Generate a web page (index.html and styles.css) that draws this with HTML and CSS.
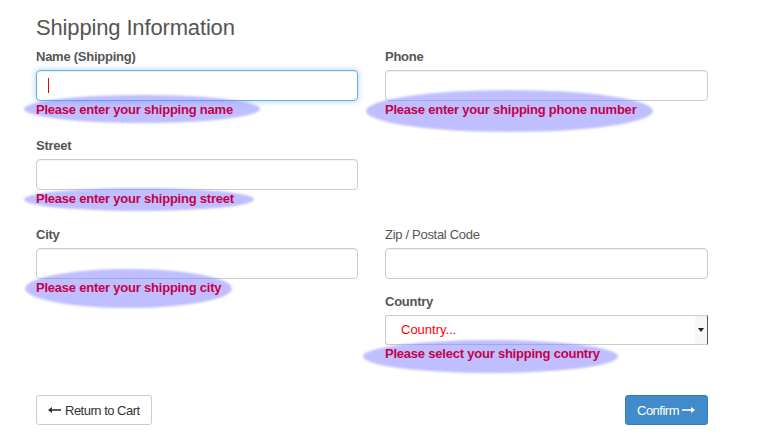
FILE: index.html
```html
<!DOCTYPE html>
<html>
<head>
<meta charset="utf-8">
<link rel="stylesheet" href="styles.css">
</head>
<body>
<div class="page">
  <h3 class="title">Shipping Information</h3>
  <div class="form-grid">
    <div class="group">
      <label class="lbl">Name (Shipping)</label>
      <div class="control focused"><span class="caret"></span></div>
      <div class="err err-name">Please enter your shipping name</div>
    </div>
    <div class="group">
      <label class="lbl">Phone</label>
      <div class="control"></div>
      <div class="err err-phone">Please enter your shipping phone number</div>
    </div>
    <div class="group">
      <label class="lbl">Street</label>
      <div class="control"></div>
      <div class="err err-street">Please enter your shipping street</div>
    </div>
    <div class="group empty"></div>
    <div class="group span2">
      <label class="lbl">City</label>
      <div class="control"></div>
      <div class="err err-city">Please enter your shipping city</div>
    </div>
    <div class="group">
      <label class="lbl normal">Zip / Postal Code</label>
      <div class="control"></div>
    </div>
    <div class="group">
      <label class="lbl">Country</label>
      <div class="select"><span class="select-text">Country...</span><span class="select-btn"><svg width="6" height="4" viewBox="0 0 6 4"><path d="M0 0h6L3 4z" fill="#222"/></svg></span></div>
      <div class="err err-country">Please select your shipping country</div>
    </div>
  </div>
  <div class="actions">
    <button class="btn btn-default"><svg class="arr" width="13" height="8" viewBox="0 0 13 8"><path d="M1 4h12" stroke="#333" stroke-width="1.6"/><path d="M0 4l4-3v6z" fill="#333"/></svg>Return to Cart</button>
    <button class="btn btn-primary">Confirm<svg class="arr r" width="13" height="8" viewBox="0 0 13 8"><path d="M0 4h12" stroke="#fff" stroke-width="1.6"/><path d="M13 4l-4-3v6z" fill="#fff"/></svg></button>
  </div>
</div>
</body>
</html>
```
FILE: styles.css
```css
* { box-sizing: border-box; }
body {
  margin: 0;
  background: #fff;
  font-family: "Liberation Sans", Arial, sans-serif;
  font-size: 13px;
  color: #555;
}
.page { padding: 0 36px; width: 744px; }
.title {
  margin: 15px 0 6px;
  font-size: 22px;
  letter-spacing: -0.15px;
  line-height: 26px;
  font-weight: normal;
  color: #555;
}
.form-grid {
  display: grid;
  grid-template-columns: 322px 323px;
  column-gap: 27px;
  row-gap: 13px;
}
.span2 { grid-row: span 2; }
.lbl {
  display: block;
  font-weight: bold;
  letter-spacing: -0.25px;
  line-height: 20px;
  margin-bottom: 3px;
  color: #555;
}
.lbl.normal { font-weight: normal; letter-spacing: -0.3px; }
.control {
  height: 31px;
  border: 1px solid #ccc;
  border-radius: 4px;
  background: #fff;
  box-shadow: inset 0 1px 1px rgba(0,0,0,0.06);
  position: relative;
}
.control.focused {
  border-color: #66afe9;
  box-shadow: inset 0 1px 1px rgba(0,0,0,0.075), 0 0 6px rgba(102,175,233,0.6);
}
.caret {
  position: absolute;
  left: 11px;
  top: 7px;
  width: 1px;
  height: 15px;
  background: #e00;
}
.err {
  position: relative;
  font-weight: bold;
  letter-spacing: -0.22px;
  line-height: 16px;
  margin-top: 1px;
  margin-bottom: 5px;
  color: #c6004a;
  z-index: 1;
}
.err::before {
  content: "";
  position: absolute;
  z-index: -1;
  border-radius: 50%;
  background: rgba(128,128,255,0.5);
  filter: blur(0.8px);
}
.err-name::before { left: -12px; top: -7px; width: 236px; height: 28px; }
.err-phone::before { left: -19px; top: -12px; width: 287px; height: 42px; }
.err-street::before { left: -12px; top: -3px; width: 230px; height: 23px; }
.err-city::before { left: -11px; top: -11px; width: 207px; height: 39px; }
.err-country::before { left: -22px; top: -6px; width: 255px; height: 33px; }
.select {
  height: 30px;
  display: flex;
  align-items: center;
  border: 1px solid #ccc;
  border-right: 1px solid #555;
  border-radius: 3px 0 0 3px;
  background: #fff;
}
.select-text {
  flex: 1;
  padding-left: 15px;
  padding-bottom: 2px;
  color: #f00;
}
.select-btn {
  width: 12px;
  height: 28px;
  display: flex;
  align-items: center;
  justify-content: center;
  background: #f6f6f4;
}
.actions {
  display: flex;
  justify-content: space-between;
  margin-top: 28px;
}
.btn {
  height: 30px;
  font-family: "Liberation Sans", Arial, sans-serif;
  font-size: 13px;
  letter-spacing: -0.5px;
  border-radius: 3px;
  display: flex;
  align-items: center;
  padding: 0 11px;
}
.btn-default {
  width: 116px;
  background: #fff;
  border: 1px solid #ccc;
  color: #333;
}
.btn-primary {
  width: 83px;
  background: #428bca;
  border: 1px solid #357ebd;
  color: #fff;
}
.arr { margin-right: 4px; }
.arr.r { margin-right: 0; margin-left: 3px; }
```
